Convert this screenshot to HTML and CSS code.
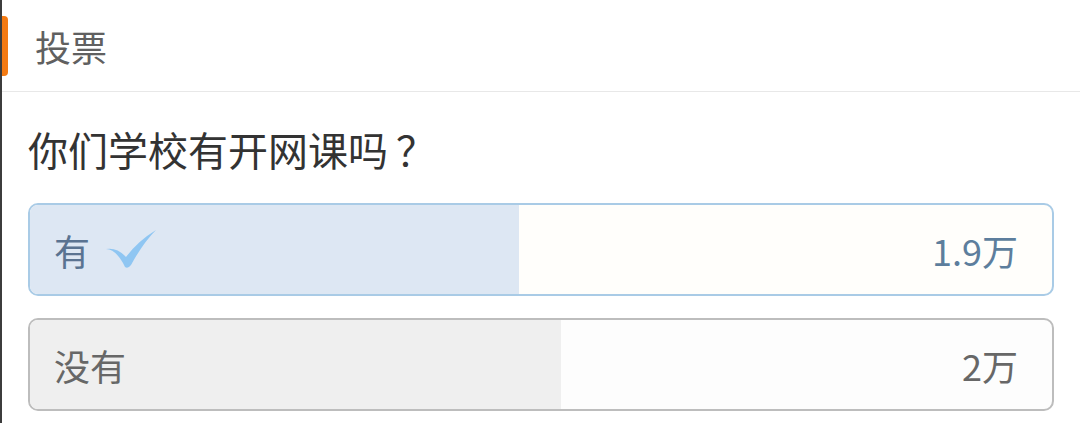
FILE: index.html
```html
<!DOCTYPE html>
<html lang="zh">
<head>
<meta charset="utf-8">
<link rel="stylesheet" href="styles.css">
</head>
<body>
<div class="page">
  <header class="header">
    <span class="bar"></span>
    <h1 class="title">投票</h1>
  </header>
  <section class="content">
    <h2 class="question">你们学校有开网课吗<span class="qmark">？</span></h2>
    <div class="option selected">
      <div class="fill" style="width: 47.8%"></div>
      <div class="label">有
        <svg class="check" width="52" height="42" viewBox="0 0 52 42"><path d="M1 21 Q10 21 18 35 L20 39 Q23 41 26 37 Q38 15 51 2 Q33 13 21 29 Q12 19 1 21 Z" fill="#8fc6f2"/></svg>
      </div>
      <div class="count">1.9万</div>
    </div>
    <div class="option">
      <div class="fill" style="width: 52%"></div>
      <div class="label">没有</div>
      <div class="count">2万</div>
    </div>
  </section>
</div>
</body>
</html>
```

FILE: styles.css
```css
html, body {
  margin: 0;
  padding: 0;
  background: #ffffff;
}
body {
  font-family: "Noto Sans CJK SC", "Noto Sans", sans-serif;
}
.page {
  width: 1080px;
  height: 423px;
  border-left: 2px solid #3c3c3c;
  box-sizing: border-box;
  overflow: hidden;
}
.header {
  height: 91px;
  border-bottom: 1px solid #e8e8e8;
  display: flex;
  align-items: center;
  margin-left: -2px;
}
.bar {
  width: 8px;
  height: 60px;
  background: #f47a12;
  border-radius: 0 4px 4px 0;
}
.title {
  margin: 0 0 0 27px;
  font-size: 36px;
  font-weight: 400;
  color: #606060;
  line-height: 1;
}
.content {
  padding: 0 26px 0 26px;
}
.question {
  margin: 0;
  padding-top: 31px;
  font-size: 40px;
  font-weight: 400;
  color: #333333;
  line-height: 52px;
}
.qmark {
  margin-left: 8px;
}
.option {
  position: relative;
  height: 93px;
  box-sizing: border-box;
  border: 2px solid #bdbdbd;
  border-radius: 10px;
  background: #fdfdfd;
  overflow: hidden;
  display: flex;
  align-items: center;
  justify-content: space-between;
  padding: 0 34px 0 24px;
  margin-top: 22px;
}
.option.selected {
  border-color: #a9cbe6;
  background: #fffefb;
  margin-top: 28px;
}
.fill {
  position: absolute;
  left: 0;
  top: 0;
  bottom: 0;
  background: #efefef;
}
.selected .fill {
  background: #dde7f3;
}
.label, .count {
  position: relative;
  font-size: 36px;
  color: #676767;
  display: flex;
  align-items: center;
}
.selected .label {
  color: #5a7391;
}
.selected .count {
  color: #5d7e9d;
}
.check {
  margin-left: 15px;
  margin-top: -2px;
}
```
